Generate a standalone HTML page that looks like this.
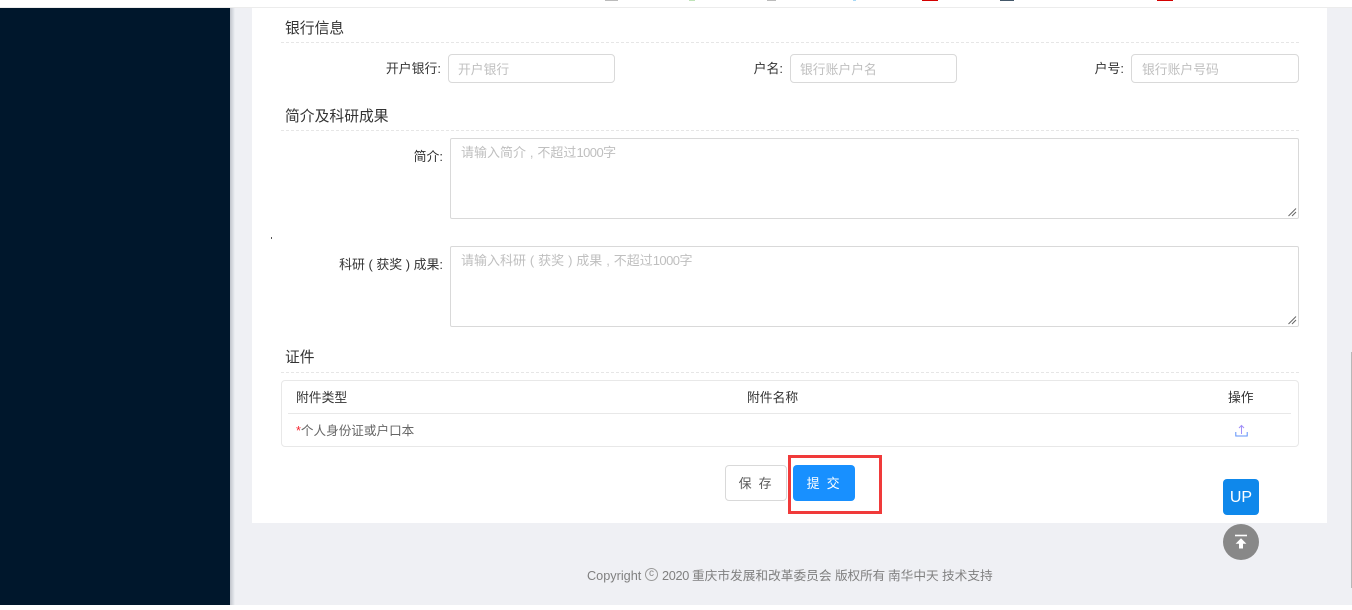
<!DOCTYPE html>
<html lang="zh-CN"><head><meta charset="utf-8"><title>银行信息</title>
<style>
html,body{margin:0;padding:0;width:1352px;height:610px;overflow:hidden;background:#fff}
body{position:relative;font-family:"Liberation Sans","Noto Sans CJK SC",sans-serif;font-size:13px;color:#333}
.a{position:absolute;box-sizing:border-box;white-space:nowrap}
.t{font-size:14.8px;color:#333;line-height:20px}
.dash{height:0;left:281px;width:1018px;border-top:1px dashed #e6e6e6}
.l{line-height:20px;text-align:right;color:#333;font-size:12.9px}
.i{border:1px solid #d9d9d9;border-radius:4px;background:#fff;color:#bfbfbf;font-size:12.8px;line-height:29px;padding-left:9px}
.ta{border:1px solid #d9d9d9;border-radius:2px;background:#fff;color:#bfbfbf;font-size:13px;line-height:20px;padding:4px 10px;left:450px;width:849px;height:81px;word-spacing:.3px}
.n{letter-spacing:-.55px}
.g{position:absolute;right:1px;bottom:1px}
.f{font-size:12.7px;line-height:20px;color:#808080;top:566px}
</style></head><body>
<div class="a" style="left:0;top:7px;width:1352px;height:1px;background:#ececec"></div>
<div class="a" style="left:0;top:8px;width:1352px;height:597px;background:#eff0f4"></div>
<div class="a" style="left:230px;top:8px;width:5px;height:597px;background:linear-gradient(90deg,#bfc4cb,#eff0f4)"></div>
<div class="a" style="left:0;top:8px;width:230px;height:597px;background:#00172c"></div>
<div class="a" style="left:252px;top:8px;width:1075px;height:515px;background:#fff"></div>
<div class="a" style="left:1351px;top:352px;width:1px;height:236px;background:#b8b8b8"></div>

<div class="a" style="left:605px;top:0;width:13px;height:1px;background:#bbb"></div>
<div class="a" style="left:689px;top:0;width:6px;height:1px;background:#bfe3b8"></div>
<div class="a" style="left:767px;top:0;width:9px;height:1px;background:#bbb"></div>
<div class="a" style="left:853px;top:0;width:3px;height:1px;background:#a8d8f5"></div>
<div class="a" style="left:922px;top:0;width:16px;height:1px;background:#d40000"></div>
<div class="a" style="left:1000px;top:0;width:14px;height:1px;background:#44586a"></div>
<div class="a" style="left:1157px;top:0;width:16px;height:1px;background:#d40000"></div>

<div class="a t" style="left:285px;top:19px">银行信息</div>
<div class="a dash" style="top:42px"></div>
<div class="a l" style="left:340px;width:101px;top:59px">开户银行:</div>
<div class="a i" style="left:448px;top:54px;width:167px;height:29px">开户银行</div>
<div class="a l" style="left:700px;width:83px;top:59px">户名:</div>
<div class="a i" style="left:790px;top:54px;width:167px;height:29px">银行账户户名</div>
<div class="a l" style="left:1040px;width:84px;top:59px">户号:</div>
<div class="a i" style="left:1131px;top:54px;width:168px;height:29px;padding-left:10px">银行账户号码</div>

<div class="a t" style="left:285px;top:107px">简介及科研成果</div>
<div class="a dash" style="top:130px"></div>
<div class="a l" style="left:340px;width:103px;top:147px">简介:</div>
<div class="a ta" style="top:138px">请输入简介 , 不超过<span class="n">1000</span>字
<svg class="g" width="10" height="10" viewBox="0 0 10 10"><path d="M1.5 9 9 1.5M5 9 9 5" stroke="#666" stroke-width="1" fill="none"/></svg></div>
<div class="a" style="left:271px;top:237px;width:1px;height:2px;background:#555"></div>
<div class="a l" style="left:300px;width:143px;top:255px">科研 ( 获奖 ) 成果:</div>
<div class="a ta" style="top:246px">请输入科研 ( 获奖 ) 成果 , 不超过<span class="n">1000</span>字
<svg class="g" width="10" height="10" viewBox="0 0 10 10"><path d="M1.5 9 9 1.5M5 9 9 5" stroke="#666" stroke-width="1" fill="none"/></svg></div>

<div class="a t" style="left:285px;top:348px">证件</div>
<div class="a dash" style="top:372px"></div>
<div class="a" style="left:281px;top:380px;width:1018px;height:67px;border:1px solid #e8e8e8;border-radius:4px"></div>
<div class="a" style="left:288px;top:413px;width:1003px;height:1px;background:#e8e8e8"></div>
<div class="a l" style="left:296px;top:388px;font-size:12.8px">附件类型</div>
<div class="a l" style="left:747px;top:388px;font-size:12.8px">附件名称</div>
<div class="a l" style="left:1228px;top:388px;font-size:12.8px">操作</div>
<div class="a l" style="left:296px;top:421px;color:#666;font-size:12.6px"><span style="color:#f5222d">*</span>个人身份证或户口本</div>
<svg class="a" style="left:1235px;top:424px" width="13" height="13" viewBox="0 0 13 13"><path d="M.8 8v4h11.4V8" stroke="#5f92f8" stroke-width="1" fill="none"/><path d="M6.5 10V1.5M4 4l2.5-2.5L9 4" stroke="#a18ff8" stroke-width="1" fill="none"/></svg>

<div class="a" style="left:725px;top:465px;width:62px;height:36px;border:1px solid #d9d9d9;border-radius:4px;background:#fff;color:#595959;font-size:13px;line-height:36px;text-align:center;letter-spacing:1.7px">保 存</div>
<div class="a" style="left:793px;top:465px;width:62px;height:36px;border-radius:4px;background:#1890ff;color:#fff;font-size:13px;line-height:38px;text-align:center;letter-spacing:1.7px">提 交</div>
<div class="a" style="left:788px;top:455px;width:94px;height:59px;border:3px solid #f03a3a"></div>

<div class="a" style="left:1223px;top:479px;width:36px;height:36px;border-radius:4px;background:#0f88eb;color:#fff;font-size:16px;line-height:37px;text-align:center">UP</div>
<div class="a" style="left:1223px;top:524px;width:36px;height:36px;border-radius:50%;background:#888"></div>
<svg class="a" style="left:1223px;top:524px" width="36" height="36" viewBox="0 0 36 36"><path d="M12 11.5h12" stroke="#fff" stroke-width="1.6" fill="none"/><path d="M18 14.2l-5.4 5.6h3.4v4.7h4v-4.7h3.4z" fill="#fff"/></svg>

<div class="a f" style="left:587px">Copyright</div>
<div class="a" style="left:645px;top:568px;width:13px;height:13px;border:1px solid #999;border-radius:50%;color:#888;font-size:10px;line-height:10px;text-align:center">c</div>
<div class="a f" style="left:662px;letter-spacing:-.3px">2020</div>
<div class="a f" style="left:692px">重庆市发展和改革委员会</div>
<div class="a f" style="left:835px;letter-spacing:-.2px">版权所有</div>
<div class="a f" style="left:888px">南华中天</div>
<div class="a f" style="left:942px">技术支持</div>
</body></html>
